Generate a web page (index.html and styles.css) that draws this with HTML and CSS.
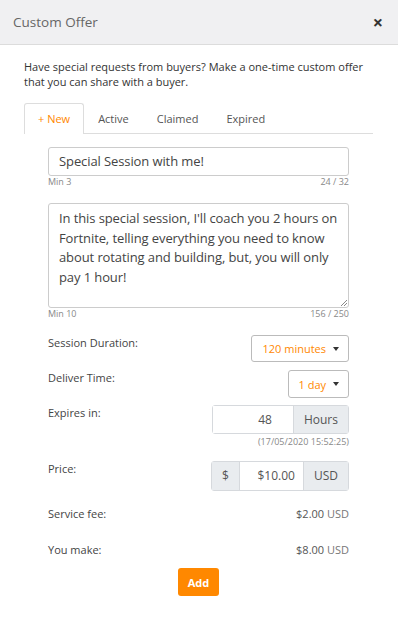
FILE: index.html
```html
<!DOCTYPE html>
<html lang="en">
<head>
    <meta charset="UTF-8">
    <meta name="viewport" content="width=device-width, initial-scale=1.0">
    <title>Custom Offer</title>
    <link rel="stylesheet" href="styles.css">
</head>
<body>
    <div class="modal">
        <div class="modal-header">
            <span class="modal-title">Custom Offer</span>
            <span class="close">&times;</span>
        </div>

        <div class="modal-body">
            <p class="intro">Have special requests from buyers? Make a one-time custom offer that you can share with a buyer.</p>

            <div class="tabs">
                <div class="tab active">+ New</div>
                <div class="tab">Active</div>
                <div class="tab">Claimed</div>
                <div class="tab">Expired</div>
            </div>

            <div class="offer-form">
                <div class="field">
                    <div class="input">Special Session with me!</div>
                    <div class="help"><span>Min 3</span><span>24 / 32</span></div>
                </div>

                <div class="field">
                    <div class="textarea">In this special session, I'll coach you 2 hours on Fortnite, telling everything you need to know about rotating and building, but, you will only pay 1 hour!
                        <svg class="grip" width="7" height="7" viewBox="0 0 7 7"><path d="M7 1 L1 7 M7 4 L4 7" stroke="#888" stroke-width="1"/></svg>
                    </div>
                    <div class="help"><span>Min 10</span><span>156 / 250</span></div>
                </div>

                <div class="row row-duration">
                    <span class="label">Session Duration:</span>
                    <div class="dropdown">120 minutes <span class="caret"></span></div>
                </div>

                <div class="row row-deliver">
                    <span class="label">Deliver Time:</span>
                    <div class="dropdown">1 day <span class="caret"></span></div>
                </div>

                <div class="row row-expires">
                    <span class="label">Expires in:</span>
                    <div class="group-wrap">
                        <div class="input-group">
                            <div class="group-input hours-input">48</div>
                            <div class="addon">Hours</div>
                        </div>
                        <div class="date-note">(17/05/2020 15:52:25)</div>
                    </div>
                </div>

                <div class="row row-price">
                    <span class="label">Price:</span>
                    <div class="input-group">
                        <div class="addon addon-left">$</div>
                        <div class="group-input price-input">$10.00</div>
                        <div class="addon">USD</div>
                    </div>
                </div>

                <div class="row row-total">
                    <span class="label">Service fee:</span>
                    <span class="amount">$2.00 <span class="currency">USD</span></span>
                </div>

                <div class="row row-total">
                    <span class="label">You make:</span>
                    <span class="amount">$8.00 <span class="currency">USD</span></span>
                </div>

                <div class="actions">
                    <button class="btn-add">Add</button>
                </div>
            </div>
        </div>
    </div>
</body>
</html>
```

FILE: styles.css
```css
/* Estilos generales */
body {
    font-family: "Open Sans", Arial, sans-serif;
    margin: 0;
    background-color: white;
    color: #444;
}

.modal {
    width: 398px;
}

.modal-header {
    height: 44px;
    background-color: #f0f0f2;
    border-bottom: 1px solid #dcdcdc;
    display: flex;
    align-items: center;
    justify-content: space-between;
    padding: 0 13px;
}

.modal-title {
    font-size: 13.5px;
    color: #666;
}

.close {
    font-size: 18px;
    font-weight: bold;
    color: #333;
    margin-right: 2px;
}

.modal-body {
    padding: 14px 25px 0 24px;
}

.intro {
    font-size: 11px;
    line-height: 15px;
    margin: 0 0 14px 0;
    color: #333;
}

.tabs {
    display: flex;
    border-bottom: 1px solid #ddd;
    height: 30px;
}

.tab {
    font-size: 11px;
    color: #555;
    padding: 0 13px;
    line-height: 30px;
    border: 1px solid transparent;
    border-bottom: none;
}

.tab.active {
    color: #ff8800;
    border-color: #ddd;
    border-radius: 3px 3px 0 0;
    background-color: white;
    height: 30px;
}

.offer-form {
    padding: 13px 24px 0 24px;
}

.input,
.textarea {
    border: 1px solid #ccc;
    border-radius: 3px;
    font-size: 13px;
    letter-spacing: -0.1px;
    color: #444;
    padding: 0 10px;
}

.input {
    height: 27px;
    line-height: 27px;
}

.textarea {
    height: 93px;
    padding-top: 5px;
    padding-bottom: 5px;
    line-height: 19.5px;
    position: relative;
}

.grip {
    position: absolute;
    right: 1px;
    bottom: 1px;
}

.help {
    display: flex;
    justify-content: space-between;
    font-size: 9px;
    color: #888;
    line-height: 12px;
    margin-bottom: 15px;
}

.row {
    display: flex;
    justify-content: space-between;
    align-items: flex-start;
    font-size: 11px;
    line-height: 15px;
}

.label {
    color: #444;
}

.dropdown {
    border: 1px solid #bbb;
    border-radius: 3px;
    color: #ff8800;
    font-size: 11px;
    height: 25px;
    padding: 0 9px 0 10px;
    display: flex;
    align-items: center;
}

.caret {
    display: inline-block;
    width: 0;
    height: 0;
    border-left: 3.5px solid transparent;
    border-right: 3.5px solid transparent;
    border-top: 4px solid #333;
    margin-left: 7px;
}

.row-duration {
    margin-bottom: 8px;
}

.row-deliver {
    margin-bottom: 7px;
}

.row-deliver .dropdown {
    height: 26px;
}

.group-wrap {
    display: flex;
    flex-direction: column;
    align-items: flex-end;
}

.input-group {
    display: flex;
    border: 1px solid #d6d9dd;
    border-radius: 3px;
    height: 27px;
    font-size: 12px;
}

.group-input {
    background-color: white;
    color: #555;
    line-height: 27px;
    text-align: right;
}

.hours-input {
    width: 59px;
    padding: 0 21px 0 0;
}

.price-input {
    width: 47px;
    padding: 0 8px;
    border-left: 1px solid #d6d9dd;
    border-right: 1px solid #d6d9dd;
}

.addon {
    background-color: #e9ecef;
    color: #555;
    line-height: 27px;
    padding: 0 10px;
}

.hours-input + .addon {
    border-left: 1px solid #d6d9dd;
}

.row-price .group-input,
.row-price .addon {
    line-height: 28px;
}

.date-note {
    font-size: 9px;
    line-height: 12px;
    color: #888;
    margin-top: 2px;
}

.row-expires {
    margin-bottom: 13px;
}

.row-price {
    margin-bottom: 4px;
}

.row-price .input-group {
    height: 28px;
}

.row-total {
    height: 36px;
    align-items: center;
}

.amount {
    color: #555;
}

.currency {
    color: #777;
}

.actions {
    display: flex;
    justify-content: center;
    margin-top: 1px;
}

.btn-add {
    background-color: #ff8800;
    color: white;
    border: none;
    border-radius: 3px;
    font-family: "Open Sans", Arial, sans-serif;
    font-weight: bold;
    font-size: 11px;
    width: 41px;
    height: 28px;
    padding: 0;
}
```
